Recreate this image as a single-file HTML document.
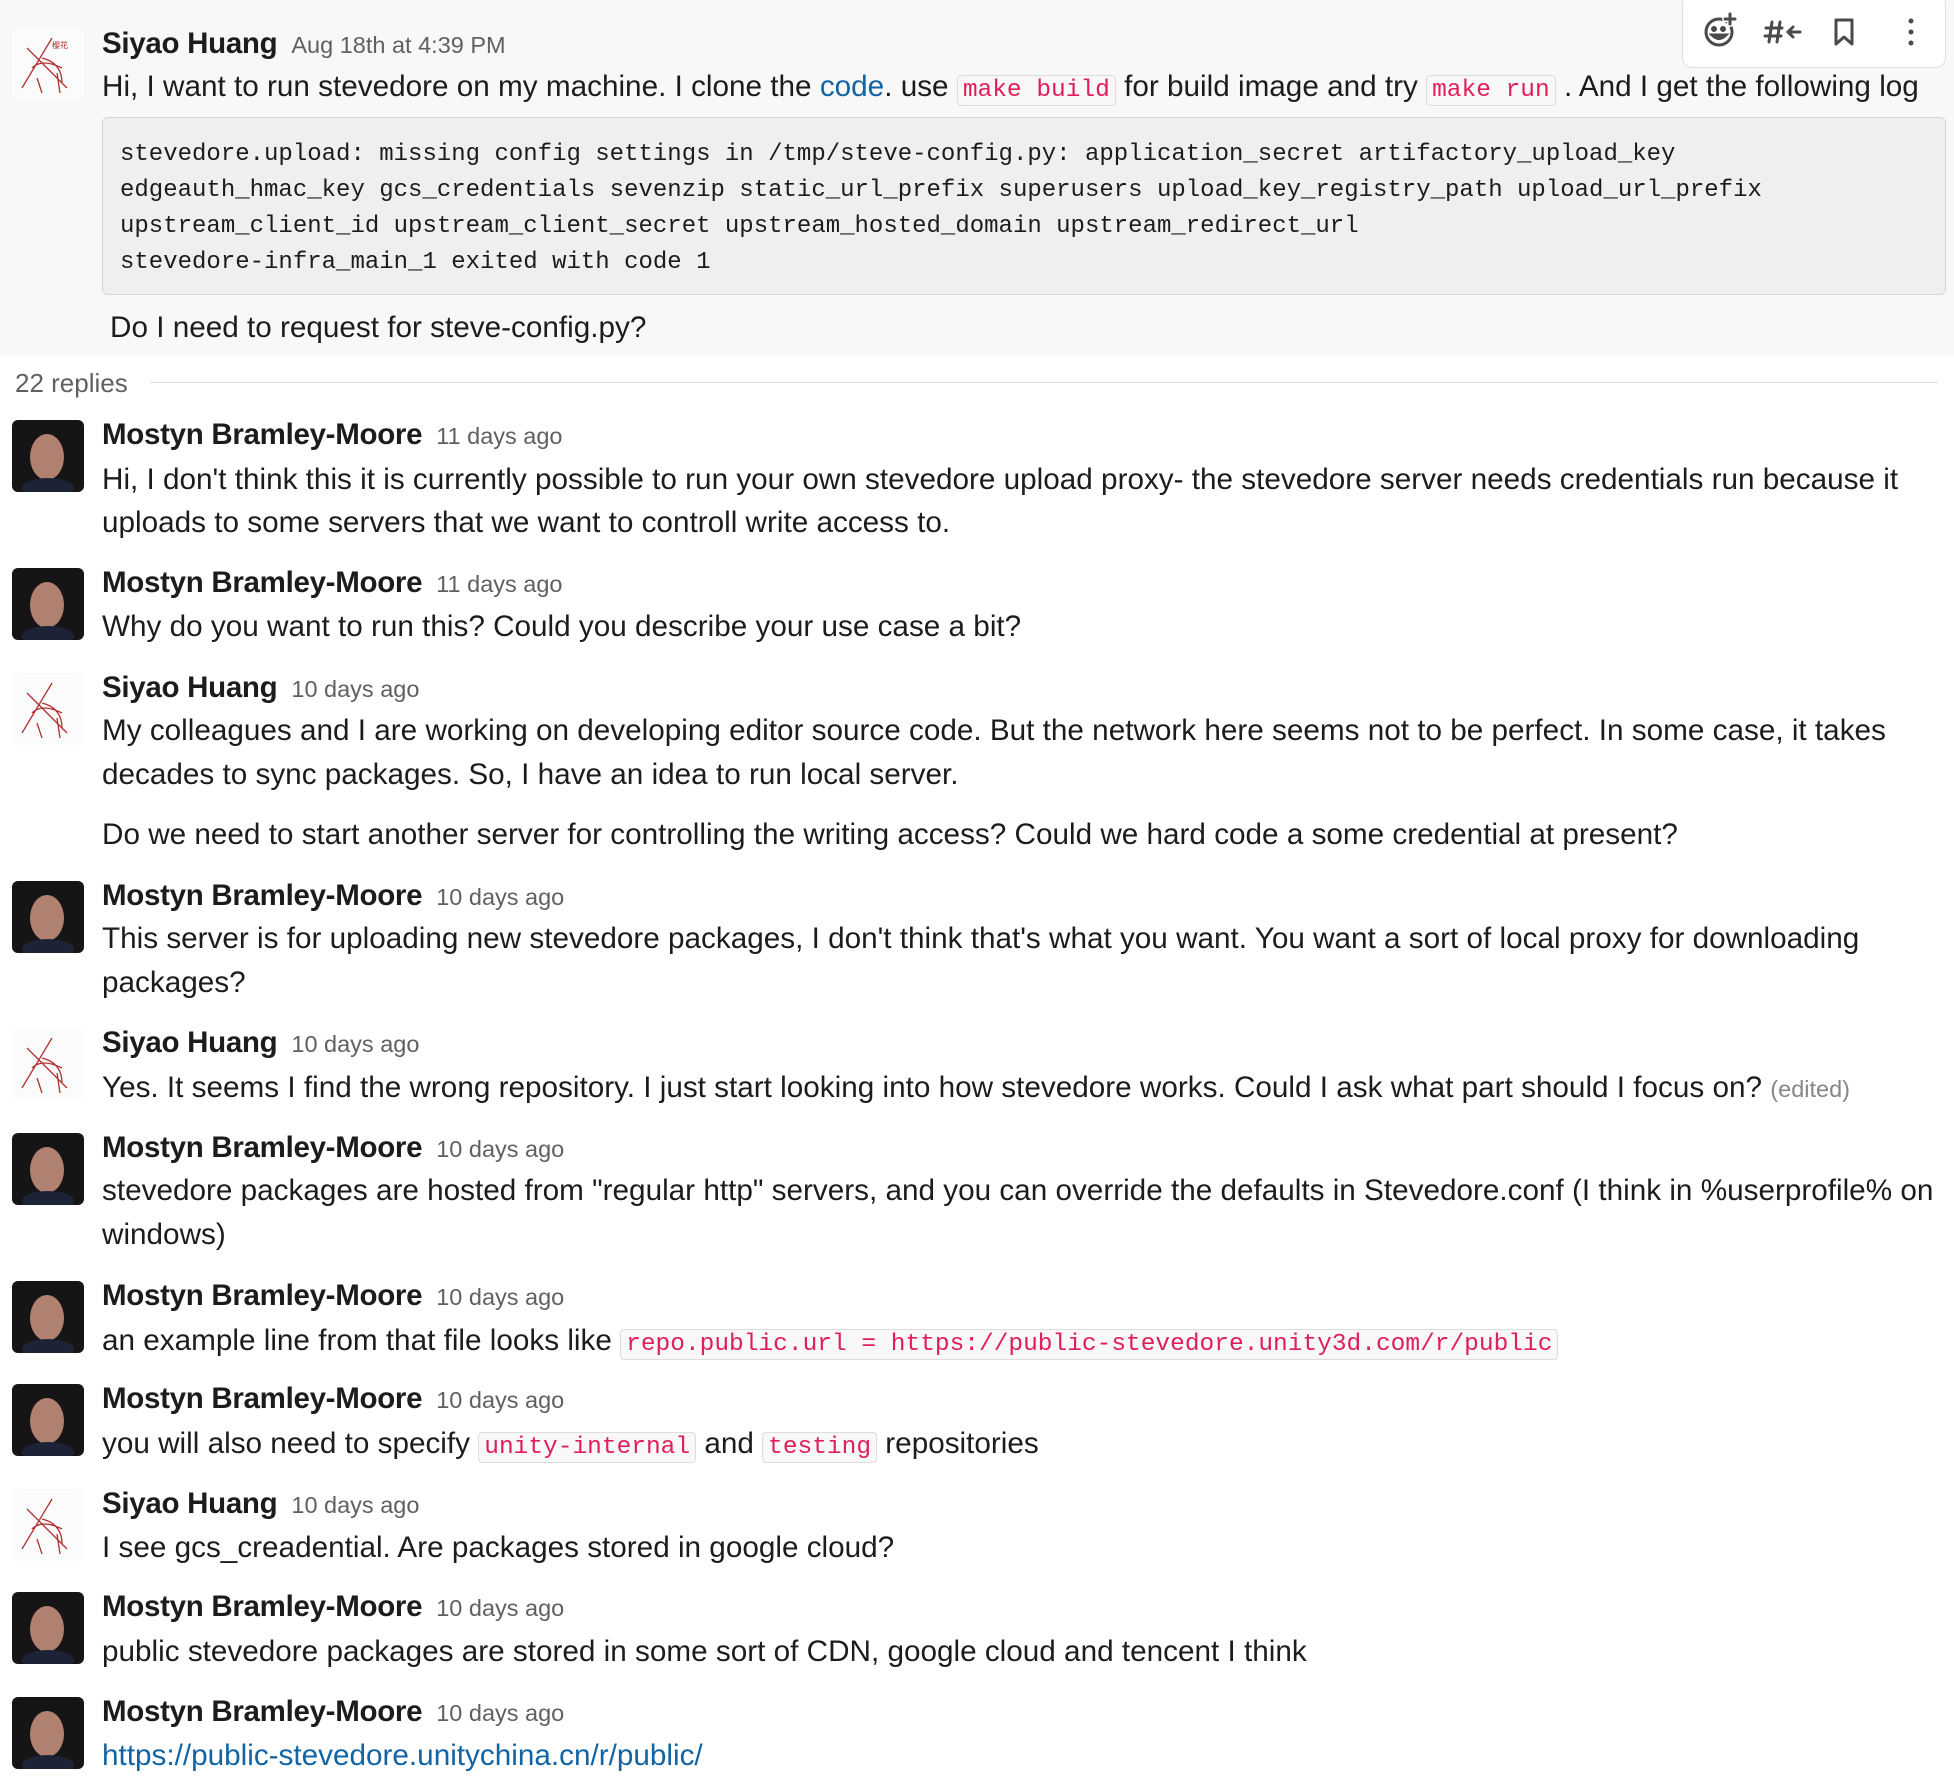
<!DOCTYPE html>
<html><head><meta charset="utf-8"><style>
*{margin:0;padding:0;box-sizing:border-box}
body{width:1954px;height:1778px;background:#fff;position:relative;overflow:hidden;font-family:"Liberation Sans",sans-serif;color:#1d1c1d}
.hdr{position:absolute;left:0;top:0;width:1954px;height:356px;background:#f8f8f8}
.l{position:absolute;left:102px;height:44px;line-height:44px;font-size:29.7px;white-space:nowrap;letter-spacing:0}
.n{font-weight:bold;font-size:29.5px;letter-spacing:-0.3px}
.t{font-weight:normal;font-size:23.5px;color:#616061;margin-left:14px;letter-spacing:0}
.c{font-family:"Liberation Mono",monospace;font-size:24.5px;color:#e01e5a;background:#f8f8f8;border:1px solid #ddd;border-radius:4px;padding:1px 5px;letter-spacing:0}
.a{color:#1264a3}
.av{position:absolute;left:12px;width:72px;height:72px;border-radius:6px;overflow:hidden}
.m{background:#151515}
.m:before{content:"";position:absolute;left:18px;top:14px;width:34px;height:46px;border-radius:50%;background:#b08070}
.m:after{content:"";position:absolute;left:10px;top:58px;width:52px;height:20px;border-radius:50%;background:#1c2336}
.s{background:#fbfbfb}
pre{position:absolute;left:102px;top:117px;width:1844px;height:178px;background:#efefef;border:1px solid #d6d6d6;border-radius:6px;font-family:"Liberation Mono",monospace;font-size:24px;line-height:36px;padding:19px 17px 0;color:#1d1c1d}
</style></head><body>
<div class="hdr"></div>
<div style="position:absolute;left:1682px;top:-6px;width:264px;height:74px;background:#fff;border:1px solid #ddd;border-radius:10px;"></div>
<svg style="position:absolute;left:1700px;top:10px" width="240" height="40" viewBox="0 0 240 40" fill="none" stroke="#4a4a4a" stroke-width="3" stroke-linecap="round">
<circle cx="19" cy="22" r="13"/><circle cx="14" cy="19" r="1.5" fill="#4a4a4a"/><circle cx="23" cy="19" r="1.5" fill="#4a4a4a"/><path d="M12 25 Q19 32 26 25 Z" fill="#4a4a4a"/><path d="M30 4v10M25 9h10" stroke="#fff" stroke-width="6"/><path d="M30 4v10M25 9h10"/>
<path d="M72 12l-3 20M80 12l-3 20M66 18h16M65 26h16M88 22h12M93 17l-5 5 5 5"/>
<path d="M136 10h16v24l-8-7-8 7z" stroke-linejoin="round"/>
<circle cx="211" cy="11" r="2.5" fill="#4a4a4a" stroke="none"/><circle cx="211" cy="22" r="2.5" fill="#4a4a4a" stroke="none"/><circle cx="211" cy="33" r="2.5" fill="#4a4a4a" stroke="none"/>
</svg>

<div class="av s" style="top:28px"><svg width="72" height="72" stroke="#b03030" fill="none" stroke-width="1.3"><path d="M10 60L40 10M15 20l40 40M30 30q20 5 20 25M20 40q10 -10 30 0M25 50l5 15M45 45l3 20"/><text x="40" y="20" font-size="8" fill="#b03030" stroke="none">樱花</text></svg></div>
<div class="l" style="top:22px"><span class="n">Siyao Huang</span><span class="t">Aug 18th at 4:39 PM</span></div>
<div class="l" style="top:65px">Hi, I want to run stevedore on my machine. I clone the <span class="a">code</span>. use <span class="c">make build</span> for build image and try <span class="c">make run</span> . And I get the following log</div>
<pre>stevedore.upload: missing config settings in /tmp/steve-config.py: application_secret artifactory_upload_key
edgeauth_hmac_key gcs_credentials sevenzip static_url_prefix superusers upload_key_registry_path upload_url_prefix
upstream_client_id upstream_client_secret upstream_hosted_domain upstream_redirect_url
stevedore-infra_main_1 exited with code 1</pre>
<div class="l" style="top:306px;left:110px">Do I need to request for steve-config.py?</div>
<div class="l" style="top:361px;left:15px;font-size:26px;color:#616061">22 replies</div>
<div style="position:absolute;left:150px;top:382px;width:1788px;height:1px;background:#ddd"></div>

<div class="av m" style="top:420px"></div>
<div class="l" style="top:413px"><span class="n">Mostyn Bramley-Moore</span><span class="t">11 days ago</span></div>
<div class="l" style="top:458px">Hi, I don't think this it is currently possible to run your own stevedore upload proxy- the stevedore server needs credentials run because it</div>
<div class="l" style="top:501px">uploads to some servers that we want to controll write access to.</div>

<div class="av m" style="top:568px"></div>
<div class="l" style="top:561px"><span class="n">Mostyn Bramley-Moore</span><span class="t">11 days ago</span></div>
<div class="l" style="top:605px">Why do you want to run this? Could you describe your use case a bit?</div>

<div class="av s" style="top:673px"><svg width="72" height="72" stroke="#b03030" fill="none" stroke-width="1.3"><path d="M10 60L40 10M15 20l40 40M30 30q20 5 20 25M20 40q10 -10 30 0M25 50l5 15M45 45l3 20"/></svg></div>
<div class="l" style="top:666px"><span class="n">Siyao Huang</span><span class="t">10 days ago</span></div>
<div class="l" style="top:709px">My colleagues and I are working on developing editor source code. But the network here seems not to be perfect. In some case, it takes</div>
<div class="l" style="top:753px">decades to sync packages. So, I have an idea to run local server.</div>
<div class="l" style="top:813px">Do we need to start another server for controlling the writing access? Could we hard code a some credential at present?</div>

<div class="av m" style="top:881px"></div>
<div class="l" style="top:874px"><span class="n">Mostyn Bramley-Moore</span><span class="t">10 days ago</span></div>
<div class="l" style="top:917px">This server is for uploading new stevedore packages, I don't think that's what you want. You want a sort of local proxy for downloading</div>
<div class="l" style="top:961px">packages?</div>

<div class="av s" style="top:1028px"><svg width="72" height="72" stroke="#b03030" fill="none" stroke-width="1.3"><path d="M10 60L40 10M15 20l40 40M30 30q20 5 20 25M20 40q10 -10 30 0M25 50l5 15M45 45l3 20"/></svg></div>
<div class="l" style="top:1021px"><span class="n">Siyao Huang</span><span class="t">10 days ago</span></div>
<div class="l" style="top:1066px">Yes. It seems I find the wrong repository. I just start looking into how stevedore works. Could I ask what part should I focus on? <span style="font-size:23.5px;color:#868686">(edited)</span></div>

<div class="av m" style="top:1133px"></div>
<div class="l" style="top:1126px"><span class="n">Mostyn Bramley-Moore</span><span class="t">10 days ago</span></div>
<div class="l" style="top:1169px">stevedore packages are hosted from "regular http" servers, and you can override the defaults in Stevedore.conf (I think in %userprofile% on</div>
<div class="l" style="top:1213px">windows)</div>

<div class="av m" style="top:1281px"></div>
<div class="l" style="top:1274px"><span class="n">Mostyn Bramley-Moore</span><span class="t">10 days ago</span></div>
<div class="l" style="top:1319px">an example line from that file looks like <span class="c">repo.public.url = https://public-stevedore.unity3d.com/r/public</span></div>

<div class="av m" style="top:1384px"></div>
<div class="l" style="top:1377px"><span class="n">Mostyn Bramley-Moore</span><span class="t">10 days ago</span></div>
<div class="l" style="top:1422px">you will also need to specify <span class="c">unity-internal</span> and <span class="c">testing</span> repositories</div>

<div class="av s" style="top:1489px"><svg width="72" height="72" stroke="#b03030" fill="none" stroke-width="1.3"><path d="M10 60L40 10M15 20l40 40M30 30q20 5 20 25M20 40q10 -10 30 0M25 50l5 15M45 45l3 20"/></svg></div>
<div class="l" style="top:1482px"><span class="n">Siyao Huang</span><span class="t">10 days ago</span></div>
<div class="l" style="top:1526px">I see gcs_creadential. Are packages stored in google cloud?</div>

<div class="av m" style="top:1592px"></div>
<div class="l" style="top:1585px"><span class="n">Mostyn Bramley-Moore</span><span class="t">10 days ago</span></div>
<div class="l" style="top:1630px">public stevedore packages are stored in some sort of CDN, google cloud and tencent I think</div>

<div class="av m" style="top:1697px"></div>
<div class="l" style="top:1690px"><span class="n">Mostyn Bramley-Moore</span><span class="t">10 days ago</span></div>
<div class="l" style="top:1734px"><span class="a">https://public-stevedore.unitychina.cn/r/public/</span></div>
</body></html>
